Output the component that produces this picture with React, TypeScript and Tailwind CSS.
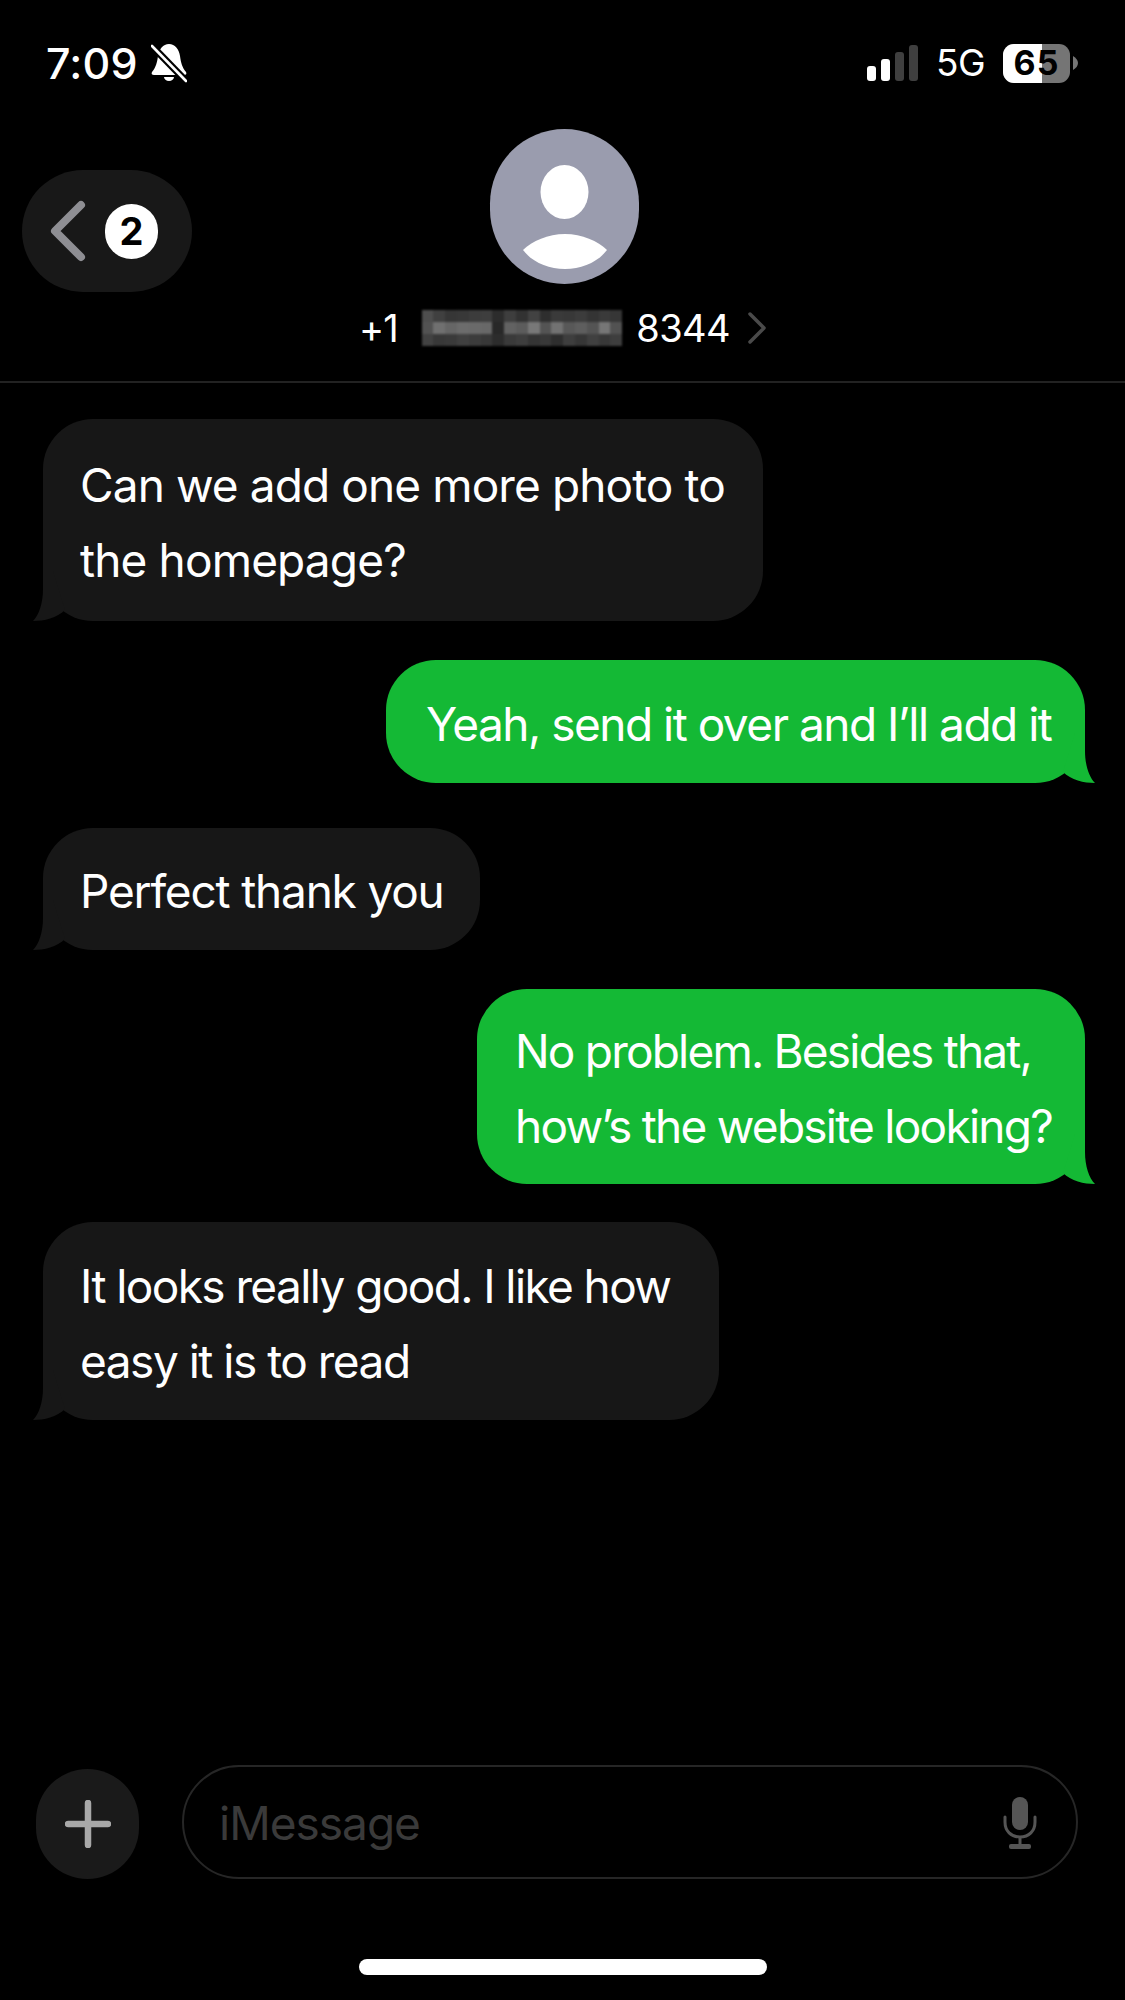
const pixelRows = [
  [78, 64, 54, 56, 60, 62, 44, 62, 50, 66, 46, 58, 56, 60, 52, 58, 54],
  [82, 112, 102, 108, 106, 104, 40, 98, 92, 120, 84, 114, 88, 94, 84, 118, 82],
  [66, 56, 58, 64, 60, 56, 44, 58, 62, 52, 56, 46, 62, 54, 64, 56, 62],
];

const messages = [
  {
    id: 1,
    mine: false,
    lines: [
      { text: "Can we add one more photo to", tracking: "tracking-[-0.9px]" },
      { text: "the homepage?", tracking: "tracking-[-0.85px]" },
    ],
    className: "mt-[36px] h-[202px] w-[720px] pl-[37px]",
  },
  {
    id: 2,
    mine: true,
    lines: [{ text: "Yeah, send it over and I’ll add it", tracking: "tracking-[-1.5px]" }],
    className: "mt-[39px] h-[123px] w-[699px] pl-[40px]",
  },
  {
    id: 3,
    mine: false,
    lines: [{ text: "Perfect thank you", tracking: "tracking-[-1.2px]" }],
    className: "mt-[45px] h-[122px] w-[437px] pl-[37px]",
  },
  {
    id: 4,
    mine: true,
    lines: [
      { text: "No problem. Besides that,", tracking: "tracking-[-1.8px]" },
      { text: "how’s the website looking?", tracking: "tracking-[-1.75px]" },
    ],
    className: "mt-[39px] h-[195px] w-[608px] pl-[38px]",
  },
  {
    id: 5,
    mine: false,
    lines: [
      { text: "It looks really good. I like how", tracking: "tracking-[-1.6px]" },
      { text: "easy it is to read", tracking: "tracking-[-1.5px]" },
    ],
    className: "mt-[38px] h-[198px] w-[676px] pl-[37px]",
  },
];

const StatusBar = () => (
  <div className="flex h-[129px] items-start justify-between pt-[43px] pr-[47px] pl-[46px]">
    <div className="flex items-center gap-[13px]">
      <span className="text-[43px] leading-[40px] font-medium tracking-[0.2px]">7:09</span>
      <svg width="36" height="40" viewBox="0 0 36 40" fill="#fff">
        <path d="M18 1C24 1 28 6 29 13C30 20 31 24 35 29C36 31 35 32 33 32H3C1 32 0 31 1 29C5 24 6 20 7 13C8 6 12 1 18 1Z" />
        <path d="M13 34h10a5 4 0 0 1-10 0Z" />
        <path d="M1 3L35 38" stroke="#000" strokeWidth="7" />
        <path d="M1 3L35 38" stroke="#fff" strokeWidth="2.6" strokeLinecap="round" />
      </svg>
    </div>
    <div className="flex items-center">
      <div className="flex h-[36px] items-end gap-[5px]">
        <div className="h-[15px] w-[9px] rounded-[3px] bg-white" />
        <div className="h-[22px] w-[9px] rounded-[3px] bg-white" />
        <div className="h-[29px] w-[9px] rounded-[3px] bg-[#3f3f3f]" />
        <div className="h-[36px] w-[9px] rounded-[3px] bg-[#3f3f3f]" />
      </div>
      <span className="ml-[18px] text-[37px] leading-[40px] font-normal tracking-[-0.5px]">5G</span>
      <div className="relative ml-[18px] flex h-[39px] w-[67px] overflow-hidden rounded-[11px] bg-[#757575]">
        <div className="h-full w-[39px] bg-white" />
        <span className="absolute inset-0 flex items-center justify-center text-[34px] leading-none font-bold tracking-[1px] text-black">
          65
        </span>
      </div>
      <svg className="ml-[3px]" width="5" height="14" viewBox="0 0 5 14" fill="#757575">
        <path d="M0 0C3 2 5 4 5 7C5 10 3 12 0 14Z" />
      </svg>
    </div>
  </div>
);

const Avatar = () => (
  <div className="ml-[3px] flex h-[155px] w-[149px] items-center justify-center rounded-full bg-[#9a9cae]">
    <svg width="149" height="155" viewBox="0 0 149 155" fill="#fff">
      <ellipse cx="74.5" cy="63" rx="24" ry="27" />
      <path d="M33 121C42 112 58 105 75 105C92 105 108 112 117 121C108 133 92 140 75 140C58 140 42 133 33 121Z" />
    </svg>
  </div>
);

const Header = () => (
  <div className="grid grid-cols-[1fr_400px_1fr] border-b-2 border-[#222222] pb-[33px]">
    <div className="pt-[41px] pl-[22px]">
      <div className="flex h-[122px] w-[170px] items-center rounded-full bg-[#181818] pl-[28px]">
        <svg width="37" height="62" viewBox="0 0 37 62" fill="none" stroke="#8e8e93" strokeWidth="8" strokeLinecap="round" strokeLinejoin="round">
          <path d="M31 5L5 31L31 57" />
        </svg>
        <div className="ml-[18px] flex h-[55px] w-[53px] items-center justify-center rounded-full bg-white text-[38px] leading-none font-bold text-black">
          2
        </div>
      </div>
    </div>
    <div className="flex flex-col items-center">
      <Avatar />
      <div className="mt-[24px] flex h-[40px] items-center text-[38px] leading-[40px] font-normal">
        <span className="tracking-[-1px]">+1</span>
        <div className="ml-[24px] flex flex-col blur-[1px]">
          {pixelRows.map((row, rowIndex) => (
            <div key={rowIndex} className="flex">
              {row.map((gray, cellIndex) => (
                <div
                  key={cellIndex}
                  className="h-[12px] w-[11.8px]"
                  style={{ backgroundColor: `rgb(${gray},${gray},${gray})` }}
                />
              ))}
            </div>
          ))}
        </div>
        <span className="ml-[14px] tracking-[-0.6px]">8344</span>
        <svg className="ml-[18px]" width="18" height="32" viewBox="0 0 18 32" fill="none" stroke="#4a4a4a" strokeWidth="3.5" strokeLinecap="round" strokeLinejoin="round">
          <path d="M2 2L16 16L2 30" />
        </svg>
      </div>
    </div>
    <div />
  </div>
);

type BubbleProps = {
  mine: boolean;
  lines: { text: string; tracking: string }[];
  className: string;
};

const Bubble = ({ mine, lines, className }: BubbleProps) => (
  <div
    className={`relative flex flex-col justify-center rounded-[50px] pt-[5px] ${
      mine ? "self-end bg-[#14b935]" : "self-start bg-[#171717]"
    } ${className}`}
  >
    {lines.map((line) => (
      <p key={line.text} className={`text-[46px] leading-[75px] font-normal whitespace-nowrap ${line.tracking}`}>
        {line.text}
      </p>
    ))}
    {/* tail only fills the corner, keeps clear of the text */}
    <svg
      className={`absolute bottom-0 ${mine ? "right-[-10px] -scale-x-100" : "left-[-10px]"}`}
      width="55"
      height="50"
      viewBox="0 0 55 50"
      fill={mine ? "#14b935" : "#171717"}
    >
      <path d="M10 0V18C10 32 6 44 0 50C11 50 24 47 32 39L20 0Z" />
    </svg>
  </div>
);

const Composer = () => (
  <div className="mt-auto flex flex-col">
    <div className="flex items-center pr-[47px] pl-[36px]">
      <div className="mt-[3px] flex h-[110px] w-[103px] shrink-0 items-center justify-center rounded-full bg-[#1a1a1a]">
        <svg width="46" height="48" viewBox="0 0 46 48" fill="none" stroke="#a8a8a8" strokeWidth="6.5" strokeLinecap="round">
          <path d="M23 3V45M3 24H43" />
        </svg>
      </div>
      <div className="ml-[43px] flex h-[114px] flex-1 items-center justify-between rounded-[57px] border-2 border-[#262626] pr-[39px] pl-[35px]">
        <span className="mt-[2px] text-[46px] leading-none font-normal tracking-[-1px] text-[#3a3a3a]">iMessage</span>
        <svg className="mt-[3px]" width="34" height="53" viewBox="0 0 34 53" fill="#555555">
          <rect x="9" y="0" width="16" height="33" rx="8" />
          <path d="M2 20V25C2 34 8 40 17 40C26 40 32 34 32 25V20" fill="none" stroke="#555555" strokeWidth="3" strokeLinecap="round" />
          <rect x="15.5" y="40" width="3" height="9" />
          <rect x="6" y="47" width="22" height="5" rx="2" />
        </svg>
      </div>
    </div>
    <div className="mt-[80px] mb-[25px] h-[16px] w-[408px] self-center rounded-full bg-white" />
  </div>
);

export default function App() {
  return (
    <div className="flex h-[2000px] w-[1125px] flex-col overflow-hidden bg-black font-['Inter',sans-serif] text-white">
      <StatusBar />
      <Header />
      <div className="flex flex-col pr-[40px] pl-[43px]">
        {messages.map((message) => (
          <Bubble key={message.id} mine={message.mine} lines={message.lines} className={message.className} />
        ))}
      </div>
      <Composer />
    </div>
  );
}
